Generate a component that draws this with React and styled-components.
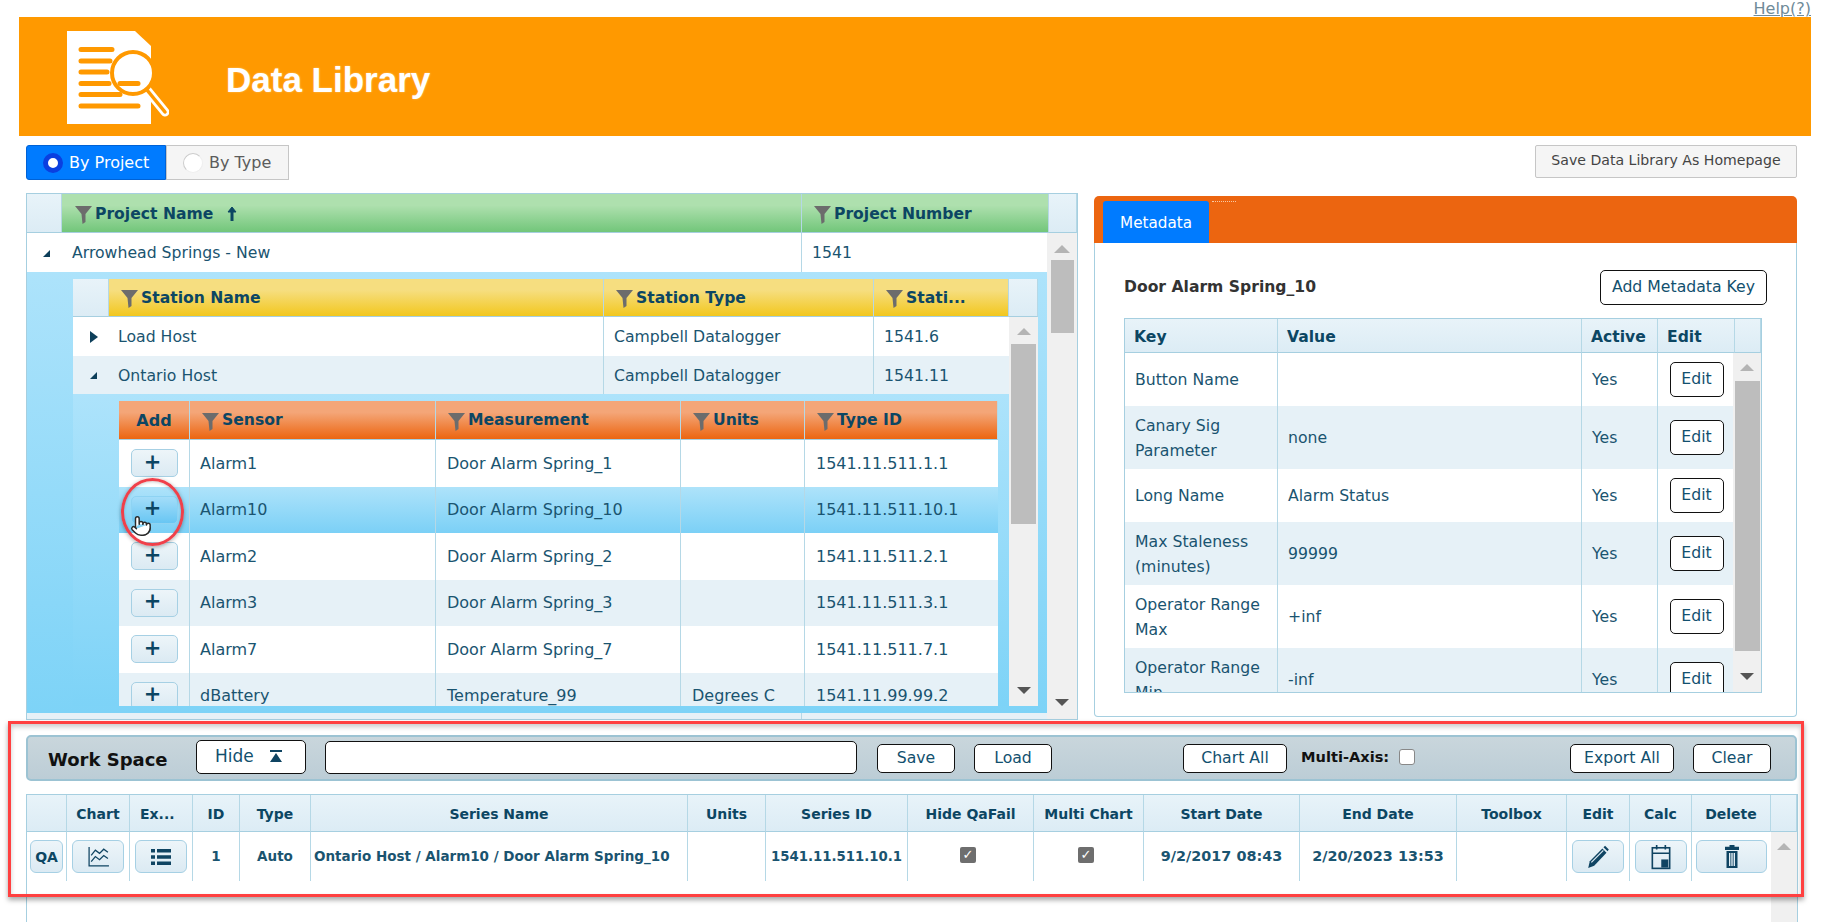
import React from "react";
import styled, { createGlobalStyle } from "styled-components";
import { Pointer } from "lucide-react";

const Global = createGlobalStyle`
  html, body { margin: 0; padding: 0; background: #fff; }
  body { font-family: "DejaVu Sans", Verdana, sans-serif; font-size: 16px; color: #1a5470; }
  * { box-sizing: border-box; }
`;

const Page = styled.div`
  position: relative; width: 1821px; height: 922px; overflow: hidden; background: #fff;
`;
const TopBar = styled.div`
  height: 17px; width: 1811px; display: flex; justify-content: flex-end; align-items: flex-end; overflow: hidden;
`;
const HelpLink = styled.a`
  font-size: 16px; line-height: 17px; color: #6f8b99; text-decoration: underline; white-space: nowrap;
`;
const Banner = styled.header`
  margin-left: 19px; width: 1792px; height: 119px; background: #ff9900;
  display: flex; align-items: center; padding-left: 48px;
`;
const LogoSvg = styled.svg`
  width: 102px; height: 94px; flex: none; margin-top: 3px;
`;
const BannerTitle = styled.h1`
  margin: 6px 0 0 57px; font: bold 35px "Liberation Sans", Arial, sans-serif; color: #fff;
  text-shadow: 0 0 2px rgba(255,255,255,.45);
`;
const ToolRow = styled.div`
  margin-top: 9px; padding: 0 14px 0 26px; width: 1811px; height: 35px;
  display: flex; justify-content: space-between; align-items: flex-start;
`;
const Toggle = styled.div` display: flex; height: 35px; `;
const ToggleOption = styled.div`
  height: 35px; display: flex; align-items: center; gap: 6px;
  width: ${p => p.$w}px; padding-left: ${p => p.$pad}px; white-space: nowrap;
  background: ${p => (p.$on ? "#007bff" : "#f5f5f5")};
  color: ${p => (p.$on ? "#fff" : "#5c5c5c")};
  border: 1px solid ${p => (p.$on ? "#0062d6" : "#c6c6c6")};
  border-radius: ${p => (p.$on ? "3px 0 0 3px" : "0")};
`;
const RadioDot = styled.span`
  width: 20px; height: 20px; border-radius: 50%; flex: none;
  background: #fff;
  border: ${p => (p.$on ? "5px solid #0a3fe0" : "1px solid #eee")};
  ${p => (p.$on ? "" : "border-top-color:#ccc;border-left-color:#ccc;")}
`;
const SaveHome = styled.button`
  font: 14.1px "DejaVu Sans", sans-serif; width: 262px; height: 33px; color: #444; background: #f5f5f5;
  border: 1px solid #c6c6c6; border-radius: 2px; padding: 0 0 3px;
`;
const Panels = styled.div`
  display: flex; align-items: flex-start; margin: 13px 0 0 26px; height: 527px;
`;
const Frame = styled.div`
  width: ${p => p.$w}px; height: ${p => p.$h}px; flex: none; overflow: hidden;
  border: 1px solid #a6cfe0; display: flex; flex-direction: column; background: ${p => p.$bg || "#fff"};
`;
const BareFrame = styled.div`
  width: ${p => p.$w}px; height: ${p => p.$h}px; flex: none; overflow: hidden;
  display: flex; flex-direction: column; background: #f0f0f0;
`;
const Row = styled.div`
  display: grid; flex: none; grid-template-columns: ${p => p.$cols}; height: ${p => p.$h}px;
  background: ${p => p.$bg || "#fff"};
`;
const HeadCell = styled.div`
  display: flex; align-items: center; gap: 3px; overflow: hidden; white-space: nowrap;
  justify-content: ${p => (p.$center ? "center" : "flex-start")};
  padding-left: ${p => (p.$pad === undefined ? 12 : p.$pad)}px;
  padding-top: ${p => p.$topPad || 0}px;
  font-weight: bold; font-size: ${p => p.$fs || 15.6}px; color: #0c4663;
  background: ${p => p.$bg};
  border-right: 1px solid #b5d8e6; border-bottom: 1px solid #a6cfe0;
`;
const Cell = styled.div`
  display: flex; align-items: center; overflow: hidden; line-height: 25px;
  justify-content: ${p => (p.$center ? "center" : "flex-start")};
  padding-left: ${p => (p.$pad === undefined ? 10 : p.$pad)}px;
  border-right: ${p => (p.$plain ? "none" : "1px solid #b5d8e6")};
  color: #1a5470; font-size: ${p => p.$fs || 15.7}px; font-weight: ${p => p.$weight || "normal"};
  white-space: ${p => (p.$wrap ? "normal" : "nowrap")};
`;
const ScrollRow = styled.div` display: flex; flex: 1; min-height: 0; `;
const ListCol = styled.div` flex: 1; min-width: 0; overflow: hidden; display: flex; flex-direction: column; `;
const Track = styled.div`
  flex: none; width: ${p => p.$w}px; background: #f0f0f0; position: relative;
  display: flex; flex-direction: column; align-items: center; padding-top: ${p => p.$top}px;
`;
const ArrowUp = styled.span`
  width: 0; height: 0; flex: none; border-left: ${p => p.$s || 8}px solid transparent; border-right: ${p => p.$s || 8}px solid transparent;
  border-bottom: ${p => (p.$s || 8)}px solid #b4b4b4;
`;
const ArrowDown = styled.span`
  width: 0; height: 0; flex: none; border-left: 7px solid transparent; border-right: 7px solid transparent;
  border-top: 7px solid #555; margin-bottom: ${p => p.$b}px;
`;
const Thumb = styled.div`
  flex: none; width: ${p => p.$w}px; height: ${p => p.$h}px; background: #bdbdbd; margin-top: ${p => p.$t}px;
`;
const TrackFill = styled.div` flex: 1; `;
const DetailBand = styled.div`
  flex: none; height: ${p => p.$h}px; padding: ${p => p.$pad};
  background: linear-gradient(#ade3fb, #7dd3f7);
`;
const LastStrip = styled.div`
  flex: 1; display: grid; grid-template-columns: 775px 1fr; background: #e6f1f7;
`;
const StripLine = styled.div` border-right: 1px solid #b5d8e6; `;
const Expander = styled.svg` width: 10px; height: 12px; fill: #0d3f5a; `;
const Funnel = styled.svg` width: 17px; height: 18px; fill: #6c6c6c; flex: none; margin-top: 3px; `;
const SortUp = styled.svg` width: 10px; height: 15px; margin-left: 11px; flex: none; stroke: #0c4663; fill: #0c4663; `;
const AddBtn = styled.button`
  width: 47px; height: 28px; padding: 0 3px 2px 0; border-radius: 5px; font: bold 21px/1 "DejaVu Sans", sans-serif; color: #0c4663;
  background: ${p => (p.$hot ? "linear-gradient(#a3ddf9, #68c6f3)" : "linear-gradient(#edf5f9, #dbeaf3)")};
  border: 1px solid ${p => (p.$hot ? "#8ed3f3" : "#a6d0e4")};
`;
const RightPanel = styled.section`
  margin: 3px 0 0 16px; width: 703px; height: 521px; display: flex; flex-direction: column;
`;
const TabStrip = styled.div`
  height: 47px; flex: none; background: #ec6510; border-radius: 5px 5px 0 0; padding: 5px 0 0 9px; display: flex; align-items: flex-start;
`;
const ActiveTab = styled.div`
  width: 106px; height: 42px; background: #007bff; color: #fff; font-size: 15.2px; padding-top: 2px;
  display: flex; align-items: center; justify-content: center; border-radius: 3px 3px 0 0;
`;
const TabDots = styled.span` width: 24px; margin-left: 3px; border-top: 1px dotted #f7c9a6; `;
const PanelBody = styled.div`
  flex: 1; min-height: 0; border: 1px solid #a6cfe0; border-top: none; border-radius: 0 0 4px 4px; padding: 27px 29px 0;
`;
const MetaHead = styled.div` display: flex; justify-content: space-between; align-items: center; height: 35px; margin-bottom: 13px; `;
const MetaTitle = styled.h2` margin: -2px 0 0; font-size: 15.6px; font-weight: bold; color: #333; `;
const OutlineBtn = styled.button`
  flex: none; font: ${p => p.$fs || 15.7}px "DejaVu Sans", sans-serif; color: #12506e; background: #fff;
  width: ${p => p.$w}px; height: ${p => p.$h}px; border: 1px solid #111; border-radius: 5px; padding: 0 0 2px;
  margin-left: ${p => (p.$ml === "auto" ? "auto" : `${p.$ml || 0}px`)};
  white-space: nowrap;
`;
const WorkBar = styled.div`
  position: relative; margin: 15px 0 0 26px; width: 1771px; height: 46px; flex: none; padding-right: 24px;
  background: linear-gradient(#c9d6dc, #bccdd6); border: 2px solid #9cc3d3; border-radius: 5px;
  display: flex; align-items: center;
`;
const WorkTitle = styled.div` margin-left: 20px; width: 122px; flex: none; font-weight: bold; font-size: 18px; color: #111; white-space: nowrap; margin-top: 2px; `;
const HideBtn = styled(OutlineBtn)`
  display: flex; align-items: center; padding-left: 18px; gap: 15px; color: #12506e; margin-top: -2px; font-size: 17px;
`;
const HideIcon = styled.svg` width: 14px; height: 14px; fill: #0f4462; `;
const NameInput = styled.input`
  flex: none; margin-left: 19px; width: 532px; height: 33px; background: #fff; border: 1px solid #111; border-radius: 5px; margin-top: -2px;
`;
const MultiLabel = styled.span` margin-left: 14px; font-weight: bold; font-size: 14.6px; color: #111; white-space: nowrap; margin-top: -3px; `;
const MultiCheck = styled.span`
  flex: none; margin: -3px 0 0 10px; width: 16px; height: 16px; border: 1px solid #888; border-radius: 3px; background: #fff;
`;
const WorkGrid = styled(Frame)` margin: 13px 0 0 26px; `;
const IconBtn = styled.button`
  width: ${p => p.$w}px; height: 33px; padding: 0; border-radius: 6px; border: 1px solid #a6d0e4;
  background: linear-gradient(#edf5f9, #dbeaf3); display: flex; align-items: center; justify-content: center;
  font: bold 14px "DejaVu Sans", sans-serif; color: #0c4663;
`;
const ToolIcon = styled.svg` width: ${p => p.$s || 22}px; height: ${p => p.$s || 22}px; flex: none; `;
const CheckBadge = styled.span`
  width: 16px; height: 16px; border-radius: 2px; background: #6e6e6e; color: #fff; display: flex; align-items: center; justify-content: center;
  font-size: 13px; font-weight: bold; margin: 0 5px 4px 0;
`;
const RedBox = styled.div`
  position: absolute; left: 8px; top: 721px; width: 1796px; height: 176px; border: 3px solid #ff4040; pointer-events: none;
  box-shadow: 0 3px 5px rgba(0,0,0,.35), inset 0 3px 5px rgba(0,0,0,.2);
`;
const RedRing = styled.div`
  position: absolute; left: 121px; top: 478px; width: 63px; height: 68px; border-radius: 50%; border: 3px solid #f0404a;
  box-shadow: 0 1px 4px rgba(0,0,0,.35), inset 0 1px 3px rgba(0,0,0,.2); pointer-events: none;
`;
const HandCursor = styled(Pointer)`
  position: absolute; left: 130px; top: 515px; fill: #fff; color: #2a2a2a; pointer-events: none;
`;

const G = { corner: "linear-gradient(#eaf3f9,#dcecf5)", green: "linear-gradient(#aee0ae 30%,#72c67a)", yellow: "linear-gradient(#f6de80 30%,#f2c71e)", orange: "linear-gradient(#f4a678 30%,#ec6510)", pale: "linear-gradient(#e8f3f9,#dcecf5)" };
const ALT = "#e6f1f7";

const FilterIcon = () => (<Funnel viewBox="0 0 17 18"><polygon points="0,0 17,0 10.5,8 10.5,16 7.5,18 6.5,8" /></Funnel>);
const ExpandedTri = () => (<Expander viewBox="0 0 10 12"><polygon points="8,3 8,10 1,10" /></Expander>);
const CollapsedTri = () => (<Expander viewBox="0 0 10 12"><polygon points="1,0 9,6 1,12" /></Expander>);

const Logo = () => (
  <LogoSvg viewBox="0 0 102 94">
    <path d="M0 0H68L84 15V93H0Z" fill="#fff" />
    <g stroke="#ff9900" strokeWidth="5" strokeLinecap="round">
      <path d="M14 18.5H45M14 30H43M14 41H40M14 52.5H42M14 63.5H53M14 75H71" />
    </g>
    <path d="M80 59L98 81" stroke="#fff" strokeWidth="9" strokeLinecap="round" />
    <path d="M80 59L98 81" stroke="#ff9900" strokeWidth="3.5" strokeLinecap="round" />
    <circle cx="66" cy="42" r="22" fill="#fff" />
    <circle cx="66" cy="42" r="21" fill="#fff" stroke="#ff9900" strokeWidth="4" />
    <path d="M53 52.5H71" stroke="#ff9900" strokeWidth="5" strokeLinecap="round" />
  </LogoSvg>
);

const sensorCols = "71px 246px 245px 124px 193px";
const sensors = [
  ["Alarm1", "Door Alarm Spring_1", "", "1541.11.511.1.1", "#fff"],
  ["Alarm10", "Door Alarm Spring_10", "", "1541.11.511.10.1", "linear-gradient(#aee3fa,#7bd0f6)", true],
  ["Alarm2", "Door Alarm Spring_2", "", "1541.11.511.2.1", "#fff"],
  ["Alarm3", "Door Alarm Spring_3", "", "1541.11.511.3.1", ALT],
  ["Alarm7", "Door Alarm Spring_7", "", "1541.11.511.7.1", "#fff"],
  ["dBattery", "Temperature_99", "Degrees C", "1541.11.99.99.2", ALT],
];
const SensorTable = () => (
  <BareFrame $w={879} $h={305}>
    <Row $cols={sensorCols} $h={39}>
      <HeadCell $bg={G.orange} $center $pad={0} $fs={16}>Add</HeadCell>
      {["Sensor", "Measurement", "Units", "Type ID"].map(t => (
        <HeadCell key={t} $bg={G.orange}><FilterIcon />{t}</HeadCell>
      ))}
    </Row>
    {sensors.map(s => (
      <Row key={s[0]} $cols={sensorCols} $h={46.5} $bg={s[4]}>
        <Cell $center $pad={0}><AddBtn $hot={s[5]}>+</AddBtn></Cell>
        <Cell $fs={16}>{s[0]}</Cell><Cell $fs={16} $pad={11}>{s[1]}</Cell><Cell $fs={16} $pad={11}>{s[2]}</Cell><Cell $fs={16} $pad={11} $plain>{s[3]}</Cell>
      </Row>
    ))}
  </BareFrame>
);

const stationCols = "36px 495px 270px 135px";
const StationTable = () => (
  <BareFrame $w={965} $h={427}>
    <Row $cols={`${stationCols} 1fr`} $h={38} $bg={G.corner}>
      <HeadCell $bg={G.pale} />
      <HeadCell $bg={G.yellow}><FilterIcon />Station Name</HeadCell>
      <HeadCell $bg={G.yellow}><FilterIcon />Station Type</HeadCell>
      <HeadCell $bg={G.yellow}><FilterIcon />Stati...</HeadCell>
      <HeadCell $bg={G.pale} />
    </Row>
    <ScrollRow>
      <ListCol>
        <Row $cols={stationCols} $h={39}>
          <Cell $pad={16} $plain><CollapsedTri /></Cell><Cell $pad={9}>Load Host</Cell><Cell $pad={10}>Campbell Datalogger</Cell><Cell $pad={10} $plain>1541.6</Cell>
        </Row>
        <Row $cols={stationCols} $h={38} $bg={ALT}>
          <Cell $pad={16} $plain><ExpandedTri /></Cell><Cell $pad={9}>Ontario Host</Cell><Cell $pad={10}>Campbell Datalogger</Cell><Cell $pad={10} $plain>1541.11</Cell>
        </Row>
        <DetailBand $h={312} $pad="7px 11px 0 46px"><SensorTable /></DetailBand>
      </ListCol>
      <Track $w={29} $top={11}>
        <ArrowUp $s={7} />
        <Thumb $w={25} $h={180} $t={9} />
        <TrackFill />
        <ArrowDown $b={12} />
      </Track>
    </ScrollRow>
  </BareFrame>
);

const metaCols = "153px 304px 76px 77px";
const meta = [
  ["Button Name", "", 53, "#fff"],
  ["Canary Sig Parameter", "none", 63, ALT],
  ["Long Name", "Alarm Status", 53, "#fff"],
  ["Max Staleness (minutes)", "99999", 63, ALT],
  ["Operator Range Max", "+inf", 63, "#fff"],
  ["Operator Range Min", "-inf", 63, ALT],
];

const workCols = [40, 63, 63, 47, 71, 377, 78, 142, 126, 110, 156, 157, 110, 63, 62, 79];
const workColStr = workCols.map(c => `${c}px`).join(" ");
const workHead = [["", 1], ["Chart", 1], ["Ex...", 0], ["ID", 1], ["Type", 1], ["Series Name", 1], ["Units", 1], ["Series ID", 1], ["Hide QaFail", 1], ["Multi Chart", 1], ["Start Date", 1], ["End Date", 1], ["Toolbox", 1], ["Edit", 1], ["Calc", 1], ["Delete", 1]];

const INK = "#0f4462";
const ChartIcon = () => (
  <ToolIcon viewBox="0 0 22 22" fill="none" stroke={INK} strokeWidth="1.2" $s={23}>
    <path d="M2 2V20H21" />
    <path d="M4 10 8 5 12 8 16 4 20 7M4 16 8 11 12 14 16 10 20 13" />
  </ToolIcon>
);
const ListIcon = () => (
  <ToolIcon viewBox="0 0 20 18" fill={INK} $s={20}>
    <path d="M0 1h4v3.5H0zM6 1h14v3.5H6zM0 7.2h4v3.5H0zM6 7.2h14v3.5H6zM0 13.5h4V17H0zM6 13.5h14V17H6z" />
  </ToolIcon>
);
const PencilIcon = () => (
  <ToolIcon viewBox="0 0 22 22" fill={INK} $s={24}>
    <path d="M2 21l1.5-6L15 3.2l3.8 3.8L7.5 19z" />
    <path d="M16 2l1.5-1.2 3.4 3.4L19.7 5.8z" />
    <path d="M4.5 15.5 15.5 4.5l.8.8-11 11z" fill="#dbeaf3" />
  </ToolIcon>
);
const CalcIcon = () => (
  <ToolIcon viewBox="0 0 20 24" fill="none" stroke={INK} strokeWidth="1.5" $s={26}>
    <rect x="2" y="3.5" width="16" height="19" />
    <path d="M2 8.5H18M6 1V5M14 1V5" />
    <rect x="11" y="15" width="5" height="6" fill={INK} />
  </ToolIcon>
);
const TrashIcon = () => (
  <ToolIcon viewBox="0 0 18 24" fill={INK} $s={24}>
    <path d="M6.5 0h5v1.8h4.5V5H2V1.8h4.5z" />
    <path d="M3.5 6h11v17h-11zM6 8v13h1.4V8zM8.3 8v13h1.4V8zM10.6 8v13H12V8z" fillRule="evenodd" />
  </ToolIcon>
);

export default function App() {
  return (
    <Page>
      <Global />
      <TopBar><HelpLink>Help(?)</HelpLink></TopBar>
      <Banner>
        <Logo />
        <BannerTitle>Data Library</BannerTitle>
      </Banner>
      <ToolRow>
        <Toggle>
          <ToggleOption $on $w={140} $pad={16}><RadioDot $on />By Project</ToggleOption>
          <ToggleOption $w={123} $pad={16}><RadioDot />By Type</ToggleOption>
        </Toggle>
        <SaveHome>Save Data Library As Homepage</SaveHome>
      </ToolRow>

      <Panels>
        <Frame $w={1052} $h={527} $bg="#f0f0f0">
          <Row $cols="35px 740px 247px 1fr" $h={39}>
            <HeadCell $bg={G.pale} />
            <HeadCell $bg={G.green} $pad={13} $topPad={1}>
              <FilterIcon />Project Name
              <SortUp viewBox="0 0 10 15"><path d="M5 1 9 6H6V15H4V6H1Z" /></SortUp>
            </HeadCell>
            <HeadCell $bg={G.green} $pad={12} $topPad={1}><FilterIcon />Project Number</HeadCell>
            <HeadCell $bg={G.pale} />
          </Row>
          <ScrollRow>
            <ListCol>
              <Row $cols="35px 740px 1fr" $h={39}>
                <Cell $pad={15} $plain><ExpandedTri /></Cell>
                <Cell $pad={10}>Arrowhead Springs - New</Cell>
                <Cell $pad={10} $plain>1541</Cell>
              </Row>
              <DetailBand $h={441} $pad="7px 10px 7px 46px"><StationTable /></DetailBand>
              <LastStrip><StripLine /></LastStrip>
            </ListCol>
            <Track $w={30} $top={12}>
              <ArrowUp $s={8} />
              <Thumb $w={23} $h={73} $t={7} />
              <TrackFill />
              <ArrowDown $b={13} />
            </Track>
          </ScrollRow>
        </Frame>

        <RightPanel>
          <TabStrip>
            <ActiveTab>Metadata</ActiveTab>
            <TabDots />
          </TabStrip>
          <PanelBody>
            <MetaHead>
              <MetaTitle>Door Alarm Spring_10</MetaTitle>
              <OutlineBtn $w={167} $h={35}>Add Metadata Key</OutlineBtn>
            </MetaHead>
            <Frame $w={638} $h={375}>
              <Row $cols={`${metaCols} 1fr`} $h={34}>
                {["Key", "Value", "Active", "Edit", ""].map((t, i) => (
                  <HeadCell key={i} $bg={G.pale} $pad={9} $topPad={3}>{t}</HeadCell>
                ))}
              </Row>
              <ScrollRow>
                <ListCol>
                  {meta.map(m => (
                    <Row key={m[0]} $cols={metaCols} $h={m[2]} $bg={m[3]}>
                      <Cell $wrap>{m[0]}</Cell>
                      <Cell>{m[1]}</Cell>
                      <Cell>Yes</Cell>
                      <Cell $center $pad={0} $plain><OutlineBtn $w={54} $h={35}>Edit</OutlineBtn></Cell>
                    </Row>
                  ))}
                </ListCol>
                <Track $w={28} $top={11}>
                  <ArrowUp $s={7} />
                  <Thumb $w={25} $h={270} $t={10} />
                  <TrackFill />
                  <ArrowDown $b={12} />
                </Track>
              </ScrollRow>
            </Frame>
          </PanelBody>
        </RightPanel>
      </Panels>

      <WorkBar>
        <WorkTitle>Work Space</WorkTitle>
        <HideBtn $ml={26} $w={110} $h={34}>
          Hide
          <HideIcon viewBox="0 0 14 14"><path d="M1 1H13V3H1ZM7 4 13 13H1Z" /></HideIcon>
        </HideBtn>
        <NameInput readOnly />
        <OutlineBtn $ml={20} $w={78} $h={29}>Save</OutlineBtn>
        <OutlineBtn $ml={19} $w={78} $h={29}>Load</OutlineBtn>
        <OutlineBtn $ml={131} $w={104} $h={29}>Chart All</OutlineBtn>
        <MultiLabel>Multi-Axis:</MultiLabel>
        <MultiCheck />
        <OutlineBtn $ml="auto" $w={104} $h={29}>Export All</OutlineBtn>
        <OutlineBtn $ml={19} $w={78} $h={29}>Clear</OutlineBtn>
      </WorkBar>

      <WorkGrid $w={1772} $h={140}>
        <Row $cols={`${workColStr} 1fr`} $h={37}>
          {workHead.map((h, i) => (
            <HeadCell key={i} $bg={G.pale} $center={!!h[1]} $pad={h[1] ? 0 : 10} $topPad={2} $fs={14}>{h[0]}</HeadCell>
          ))}
          <HeadCell $bg={G.pale} />
        </Row>
        <ScrollRow>
          <ListCol>
            <Row $cols={workColStr} $h={49}>
              <Cell $center $pad={0}><IconBtn $w={33}>QA</IconBtn></Cell>
              <Cell $center $pad={0}><IconBtn $w={52}><ChartIcon /></IconBtn></Cell>
              <Cell $center $pad={0}><IconBtn $w={52}><ListIcon /></IconBtn></Cell>
              <Cell $center $pad={0} $fs={13.5} $weight="bold">1</Cell>
              <Cell $center $pad={0} $fs={13.5} $weight="bold">Auto</Cell>
              <Cell $pad={3} $fs={13.5} $weight="bold">Ontario Host / Alarm10 / Door Alarm Spring_10</Cell>
              <Cell />
              <Cell $center $pad={0} $fs={13.3} $weight="bold">1541.11.511.10.1</Cell>
              <Cell $center $pad={0}><CheckBadge>✓</CheckBadge></Cell>
              <Cell $center $pad={0}><CheckBadge>✓</CheckBadge></Cell>
              <Cell $center $pad={0} $fs={14.4} $weight="bold">9/2/2017 08:43</Cell>
              <Cell $center $pad={0} $fs={14.4} $weight="bold">2/20/2023 13:53</Cell>
              <Cell />
              <Cell $center $pad={0}><IconBtn $w={52}><PencilIcon /></IconBtn></Cell>
              <Cell $center $pad={0}><IconBtn $w={52}><CalcIcon /></IconBtn></Cell>
              <Cell $center $pad={0} $plain><IconBtn $w={71}><TrashIcon /></IconBtn></Cell>
            </Row>
          </ListCol>
          <Track $w={26} $top={11}>
            <ArrowUp $s={7} />
          </Track>
        </ScrollRow>
      </WorkGrid>

      <RedBox />
      <RedRing />
      <HandCursor size={22} strokeWidth={1.6} />
    </Page>
  );
}
